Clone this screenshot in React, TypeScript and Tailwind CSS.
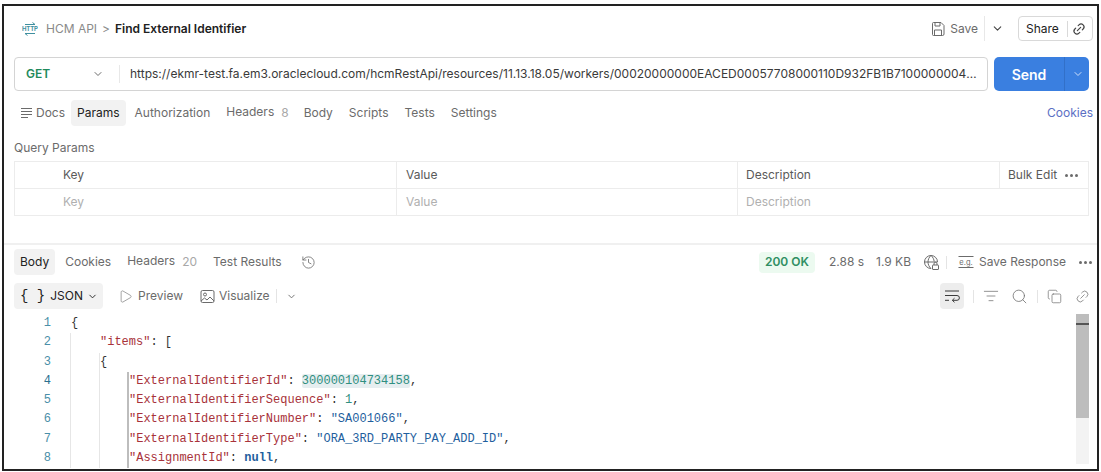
import React from "react";
import { ChevronDown, Copy, Link2, ListFilter, Play, Search, History } from "lucide-react";

const SANS = "font-['Inter','Noto_Sans',sans-serif]";

// --- ICONS ---
function HttpIcon() {
  return (
    <svg width="16" height="16" viewBox="0 0 16 16" fill="none" stroke="#3f8f9f" strokeWidth="1">
      <path d="M3 3.5h10M10.5 1.5l2.5 2M3 12.5h10M5.5 14.5l-2.5-2" />
      <text x="0" y="10.2" fontSize="6" fontWeight="700" fill="#3f8f9f" stroke="none" fontFamily="Inter, sans-serif" textLength="16">
        HTTP
      </text>
    </svg>
  );
}

function SaveIcon() {
  return (
    <svg width="16" height="16" viewBox="0 0 16 16" fill="none" stroke="#6b6b6b" strokeWidth="1">
      <path d="M2.5 2.5a1 1 0 0 1 1-1h7.5l3 3v8.5a1.5 1.5 0 0 1-1.5 1.5h-9a1 1 0 0 1-1-1z" />
      <path d="M5 1.5v3.5h5v-3.5M4.5 14.500v-5.500h7v5.500" />
    </svg>
  );
}

function DocsIcon() {
  return (
    <svg width="13" height="12" viewBox="0 0 13 12" fill="none" stroke="#6b6b6b" strokeWidth="1">
      <path d="M1 1.500h11M1 4.500h11M1 7.500h11M1 10.500h7" />
    </svg>
  );
}

function PictureIcon() {
  return (
    <svg width="15" height="15" viewBox="0 0 15 15" fill="none" stroke="#6b6b6b" strokeWidth="1">
      <rect x="1" y="1.500" width="13" height="12" rx="1.500" />
      <circle cx="5" cy="5.500" r="1.500" />
      <path d="M1 12l3.500-3 2.500 2 3-3 4 4" />
    </svg>
  );
}

function GlobeLockIcon() {
  return (
    <svg width="17" height="17" viewBox="0 0 17 17" fill="none" stroke="#6b6b6b" strokeWidth="1">
      <path d="M8 14.500a6.500 6.500 0 1 1 6.500-6.500M1.500 8h13M8 1.500c-4 3.500-4 9.500 0 13M8 1.500c2 1.700 3 4 3.200 6" />
      <rect x="9.500" y="11" width="6" height="4.500" rx="0.500" fill="white" />
      <path d="M11 11V9.800a1.500 1.500 0 0 1 3 0V11" />
    </svg>
  );
}

function ExampleIcon() {
  return (
    <svg width="16" height="14" viewBox="0 0 16 14" fill="none">
      <path d="M0.500 1.500h15M0.500 12.500h15" stroke="#6b6b6b" strokeWidth="1" />
      <text x="8" y="9.500" textAnchor="middle" fontSize="7.500" fill="#6b6b6b" fontFamily="Inter, sans-serif">e.g.</text>
    </svg>
  );
}

function WrapIcon() {
  return (
    <svg width="16" height="14" viewBox="0 0 16 14" fill="none" stroke="#3a3a3a" strokeWidth="1">
      <path d="M1 2h14M1 6.500h12a2.200 2.200 0 0 1 0 4.800H8.500M10.500 9.200l-2.200 2.100 2.200 2M1 11.300h4" />
    </svg>
  );
}

function Sep() {
  return <span className="mx-[9px] h-[13px] w-px bg-[#e4e4e4]" />;
}

function Dot() {
  return <span className="h-[3px] w-[3px] rounded-full bg-[#d5d5d5]" />;
}

function Dots() {
  return (
    <span className="flex gap-[2px]">
      <span className="h-[3px] w-[3px] rounded-full bg-[#6b6b6b]" />
      <span className="h-[3px] w-[3px] rounded-full bg-[#6b6b6b]" />
      <span className="h-[3px] w-[3px] rounded-full bg-[#6b6b6b]" />
    </span>
  );
}

// --- CODE VIEW DATA ---
type Tok = { t: string; c?: string };
const KEY = "text-[#a8323a]";
const STR = "text-[#1f5f9e]";
const NUM = "text-[#2f8f80]";
const PUN = "text-[#333333]";

const LINES: { indent: number; toks: Tok[] }[] = [
  { indent: 0, toks: [{ t: "{", c: PUN }] },
  { indent: 1, toks: [{ t: '"items"', c: KEY }, { t: ": [", c: PUN }] },
  { indent: 2, toks: [{ t: "{", c: PUN }] },
  { indent: 3, toks: [{ t: '"ExternalIdentifierId"', c: KEY }, { t: ": ", c: PUN }, { t: "300000104734158", c: "hl" }, { t: ",", c: PUN }] },
  { indent: 3, toks: [{ t: '"ExternalIdentifierSequence"', c: KEY }, { t: ": ", c: PUN }, { t: "1", c: NUM }, { t: ",", c: PUN }] },
  { indent: 3, toks: [{ t: '"ExternalIdentifierNumber"', c: KEY }, { t: ": ", c: PUN }, { t: '"SA001066"', c: STR }, { t: ",", c: PUN }] },
  { indent: 3, toks: [{ t: '"ExternalIdentifierType"', c: KEY }, { t: ": ", c: PUN }, { t: '"ORA_3RD_PARTY_PAY_ADD_ID"', c: STR }, { t: ",", c: PUN }] },
  { indent: 3, toks: [{ t: '"AssignmentId"', c: KEY }, { t: ": ", c: PUN }, { t: "null", c: "font-bold text-[#1f5f9e]" }, { t: ",", c: PUN }] },
];

export default function App() {
  return (
    <div className={`h-[472px] w-[1101px] overflow-hidden bg-white pb-[1px] pl-[2px] pr-[2px] pt-[4px] ${SANS}`}>
      <div className="h-[467px] overflow-hidden border-2 border-[#222222] bg-white pl-[10px] pr-[4px] text-[12px] text-[#6b6b6b]">
        {/* --- TITLE BAR --- */}
        <header className="flex h-[45px] items-center pl-[8px]">
          <HttpIcon />
          <span className="ml-[8px] text-[#8a8a8a]">HCM API</span>
          <span className="mx-[5px] text-[#8a8a8a]">&gt;</span>
          <span className="font-semibold text-[#212121]">Find External Identifier</span>
          <div className="ml-auto flex items-center">
            <SaveIcon />
            <span className="ml-[4px]">Save</span>
            <span className="ml-[6px] h-[25px] w-px bg-[#e8e8e8]" />
            <ChevronDown size={13} strokeWidth={2} className="mx-[6px] text-[#444444]" />
            <div className="ml-[8px] flex h-[25px] w-[75px] items-center rounded-[4px] border border-[#d9d9d9] pl-[7px] text-[#212121]">
              Share
              <span className="ml-[8px] h-[16px] w-px bg-[#d9d9d9]" />
              <Link2 size={14} className="ml-[4px] -rotate-45 text-[#444444]" />
            </div>
          </div>
        </header>

        {/* --- URL BAR --- */}
        <div className="mt-[6px] flex h-[34px] gap-[6px]">
          <div className="flex w-[974px] items-center rounded-[4px] border border-[#d4d4d4]">
            <span className="ml-[11px] w-[66px] font-semibold text-[#1f8a5b]">GET</span>
            <ChevronDown size={12} className="text-[#6b6b6b]" />
            <span className="ml-[15px] mr-[10px] h-[18px] w-px bg-[#e8e8e8]" />
            <span className="min-w-0 flex-1 truncate pr-[6px] text-[#3a3a3a]">
              https://ekmr-test.fa.em3.oraclecloud.com/hcmRestApi/resources/11.13.18.05/workers/00020000000EACED00057708000110D932FB1B7100000004AC
            </span>
          </div>
          <div className="flex w-[95px] items-center rounded-[5px] bg-[#3a7fe0] text-white">
            <span className="flex h-full w-[70px] items-center justify-center text-[14px] font-semibold">Send</span>
            <span className="h-full w-px bg-[#3270c8]" />
            <ChevronDown size={12} className="ml-[7px] text-[#cfe0fa]" />
          </div>
        </div>

        {/* --- REQUEST TABS --- */}
        <nav className="mt-[9px] flex h-[26px] items-center">
          <span className="ml-[6px] flex items-center gap-[3px]"><DocsIcon />Docs</span>
          <span className="ml-[6px] flex h-[26px] items-center rounded-[4px] bg-[#f2f2f2] px-[6px] text-[#212121]">Params</span>
          <span className="ml-[9px]">Authorization</span>
          <span className="ml-[16px] -translate-y-[1px]">Headers</span>
          <span className="ml-[7px] text-[#a8a8a8]">8</span>
          <span className="ml-[15px]">Body</span>
          <span className="ml-[16px]">Scripts</span>
          <span className="ml-[16px]">Tests</span>
          <span className="ml-[16px]">Settings</span>
          <span className="ml-auto text-[#5c6fc4]">Cookies</span>
        </nav>

        {/* --- QUERY PARAMS --- */}
        <div className="mt-[13px] h-[17px] leading-[17px]">Query Params</div>
        <div className="mt-[5px] w-[1075px] border border-[#ececec]">
          <div className="flex h-[27px] items-center border-b border-[#ececec] text-[#5a5a5a]">
            <span className="w-[381px] pl-[48px]">Key</span>
            <span className="flex h-full w-[341px] items-center border-l border-[#ececec] pl-[9px]">Value</span>
            <span className="flex h-full w-[262px] items-center border-l border-[#ececec] pl-[8px]">Description</span>
            <span className="flex h-full flex-1 items-center gap-[8px] border-l border-[#ececec] pl-[8px]">Bulk Edit <Dots /></span>
          </div>
          <div className="flex h-[26px] items-center text-[#b0b0b0]">
            <span className="w-[381px] pl-[48px]">Key</span>
            <span className="flex h-full w-[341px] items-center border-l border-[#ececec] pl-[9px]">Value</span>
            <span className="flex h-full flex-1 items-center border-l border-[#ececec] pl-[8px]">Description</span>
          </div>
        </div>

        {/* --- RESPONSE HEADER --- */}
        <div className="-ml-[10px] -mr-[4px] mt-[27px] h-[2px] bg-[#f0f0f0]" />
        <div className="mt-[4px] flex h-[26px] items-center">
          <span className="flex h-[26px] items-center rounded-[4px] bg-[#f2f2f2] px-[6px] text-[#212121]">Body</span>
          <span className="ml-[10px]">Cookies</span>
          <span className="ml-[16px] -translate-y-[1px]">Headers</span>
          <span className="ml-[7px] text-[#a8a8a8]">20</span>
          <span className="ml-[16px]">Test Results</span>
          <History size={15} strokeWidth={1.300} className="ml-[19px] text-[#6b6b6b]" />
          <div className="ml-auto flex items-center pr-[1px]">
            <span className="flex h-[21px] items-center rounded-[4px] bg-[#ecfaf0] px-[6px] font-semibold text-[#2f8f63]">200 OK</span>
            <span className="mx-[7px]"><Dot /></span>
            <span>2.88 s</span>
            <span className="mx-[6px]"><Dot /></span>
            <span>1.9 KB</span>
            <span className="mx-[6px]"><Dot /></span>
            <GlobeLockIcon />
            <span className="ml-[6px] mr-[11px] h-[13px] w-px bg-[#e4e4e4]" />
            <ExampleIcon />
            <span className="ml-[5px]">Save Response</span>
            <span className="ml-[13px]"><Dots /></span>
          </div>
        </div>

        {/* --- RESPONSE TOOLBAR --- */}
        <div className="mt-[8px] flex h-[26px] items-center">
          <span className="flex h-[26px] items-center rounded-[4px] bg-[#f2f2f2] pl-[6px] pr-[5px] text-[#212121]">
            <span className="mr-[5px] text-[14px] font-['Liberation_Mono',monospace]">{"{ }"}</span>
            JSON
            <ChevronDown size={11} strokeWidth={2} className="ml-[4px]" />
          </span>
          <Play size={15} strokeWidth={1} className="ml-[15px]" />
          <span className="ml-[5px]">Preview</span>
          <span className="ml-[17px]"><PictureIcon /></span>
          <span className="ml-[4px]">Visualize</span>
          <span className="ml-[6px] h-[14px] w-px bg-[#e4e4e4]" />
          <ChevronDown size={11} className="ml-[9px]" />
          <div className="ml-auto flex items-center pr-[3px] text-[#6b6b6b]">
            <span className="flex h-[26px] w-[24px] items-center justify-center rounded-[4px] bg-[#ededed]"><WrapIcon /></span>
            <Sep />
            <ListFilter size={16} strokeWidth={1.100} />
            <Search size={17} strokeWidth={1.100} className="ml-[12px]" />
            <Sep />
            <Copy size={15} strokeWidth={1.100} />
            <Link2 size={15} strokeWidth={1.100} className="ml-[13px] -rotate-45" />
          </div>
        </div>

        {/* --- CODE VIEW --- */}
        <div className="mt-[5px] flex font-['Liberation_Mono',monospace] text-[12px] leading-[19.300px]">
          <div className="w-[1062px]">
            {LINES.map((line, i) => (
              <div key={i} className="flex h-[19.300px] whitespace-pre">
                <span className={`w-[37px] text-right ${i === 3 ? "text-[#2a6f8f]" : "text-[#4a8fa8]"}`}>{i + 1}</span>
                <span className={`ml-[19px] flex h-full ${i > 0 ? "border-l border-[#e6e6e6]" : "border-l border-transparent"}`}>
                  {line.indent >= 2 && <span className="w-[29px] border-r border-[#e6e6e6]" />}
                  {line.indent >= 3 && <span className="w-[29px] border-r-2 border-[#bdbdbd]" />}
                  <span className={line.indent === 1 ? "ml-[29px]" : line.indent === 0 ? "" : ""}>
                    {line.toks.map((tok, j) =>
                      tok.c === "hl" ? (
                        <span key={j} className="rounded-[2px] bg-[#e6eef0] text-[#2f8f80]">{tok.t}</span>
                      ) : (
                        <span key={j} className={tok.c}>{tok.t}</span>
                      )
                    )}
                  </span>
                </span>
              </div>
            ))}
          </div>
          <div className="h-[150px] w-[13px] bg-[#f3f3f3]">
            <div className="h-[104px] bg-[#bdbdbd] pt-[9px]">
              <div className="h-[2px] bg-[#555555]" />
            </div>
          </div>
        </div>
      </div>
    </div>
  );
}
